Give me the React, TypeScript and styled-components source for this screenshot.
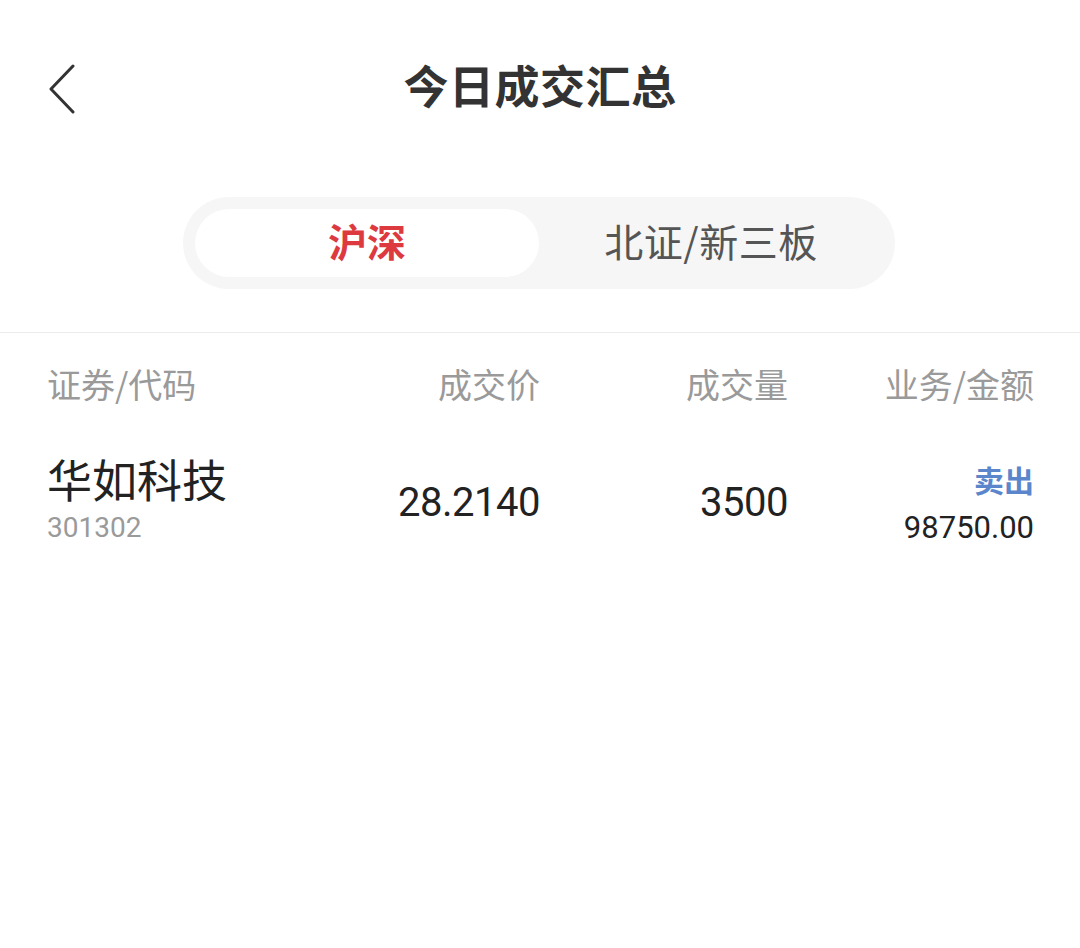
import styled, { createGlobalStyle } from "styled-components";
import { useState } from "react";

const GlobalStyle = createGlobalStyle`
  html, body {
    margin: 0;
    padding: 0;
    background: #ffffff;
  }
  body {
    font-family: Roboto, "Noto Sans CJK SC", sans-serif;
    -webkit-font-smoothing: antialiased;
  }
`;

const tabs = ["沪深", "北证/新三板"];

const rows = [
  {
    name: "华如科技",
    code: "301302",
    price: "28.2140",
    volume: "3500",
    side: "卖出",
    amount: "98750.00",
  },
];

const App = () => {
  const [active, setActive] = useState(0);

  return (
    <Page>
      <GlobalStyle />
      <Header>
        <BackButton type="button" aria-label="返回">
          <svg width="28" height="50" viewBox="0 0 28 50">
            <polyline
              points="25,2 3,25 25,48"
              fill="none"
              stroke="#333333"
              strokeWidth="3"
              strokeLinecap="round"
              strokeLinejoin="round"
            />
          </svg>
        </BackButton>
        <Title>今日成交汇总</Title>
        <span />
      </Header>

      <TabSection>
        <TabBar>
          {tabs.map((t, i) => (
            <Tab key={t} $active={active === i} onClick={() => setActive(i)}>
              {t}
            </Tab>
          ))}
        </TabBar>
      </TabSection>

      <Table>
        <HeadRow>
          <HeadCell>证券/代码</HeadCell>
          <HeadCell $right>成交价</HeadCell>
          <HeadCell $right>成交量</HeadCell>
          <HeadCell $right>业务/金额</HeadCell>
        </HeadRow>
        {rows.map((r) => (
          <DataRow key={r.code}>
            <Stack>
              <StockName>{r.name}</StockName>
              <SubText>{r.code}</SubText>
            </Stack>
            <Number>{r.price}</Number>
            <Number>{r.volume}</Number>
            <Stack $right>
              <Side>{r.side}</Side>
              <Amount>{r.amount}</Amount>
            </Stack>
          </DataRow>
        ))}
      </Table>
    </Page>
  );
};

export default App;

const Page = styled.div`
  width: 1080px;
  min-height: 948px;
  background: #ffffff;
`;

const Header = styled.header`
  height: 176px;
  display: grid;
  grid-template-columns: 1fr auto 1fr;
  align-items: center;
`;

const BackButton = styled.button`
  justify-self: start;
  margin-left: 48px;
  margin-top: 1px;
  padding: 0;
  border: none;
  background: none;
  display: flex;
  cursor: pointer;
`;

const Title = styled.h1`
  margin: 0 0 7px;
  font-family: "Noto Sans CJK SC", sans-serif;
  font-size: 45px;
  font-weight: 700;
  color: #333333;
  letter-spacing: 0.5px;
`;

const TabSection = styled.div`
  padding: 21px 0 43px;
  border-bottom: 1px solid #ebebeb;
  display: flex;
  justify-content: center;
`;

const TabBar = styled.div`
  width: 712px;
  box-sizing: border-box;
  margin-left: -2px;
  padding: 12px;
  border-radius: 46px;
  background: #f6f6f6;
  display: grid;
  grid-template-columns: 1fr 1fr;
`;

const Tab = styled.div<{ $active?: boolean }>`
  height: 68px;
  box-sizing: border-box;
  padding-bottom: 6px;
  border-radius: 34px;
  display: flex;
  align-items: center;
  justify-content: center;
  font-family: "Noto Sans CJK SC", sans-serif;
  font-size: 39px;
  font-weight: ${(p) => (p.$active ? 700 : 400)};
  color: ${(p) => (p.$active ? "#dc3a3f" : "#555555")};
  background: ${(p) => (p.$active ? "#ffffff" : "transparent")};
  letter-spacing: ${(p) => (p.$active ? "0" : "0.5px")};
  cursor: pointer;
`;

const Table = styled.div`
  padding: 0 46px 0 47px;
`;

const rowGrid = `
  display: grid;
  grid-template-columns: 1fr 240px 248px 246px;
`;

const HeadRow = styled.div`
  ${rowGrid}
  height: 100px;
  align-items: center;
`;

const HeadCell = styled.div<{ $right?: boolean }>`
  font-family: "Noto Sans CJK SC", sans-serif;
  font-size: 34px;
  color: #9a9a9a;
  text-align: ${(p) => (p.$right ? "right" : "left")};
`;

const DataRow = styled.div`
  ${rowGrid}
  padding: 20px 0;
  align-items: center;
`;

const Stack = styled.div<{ $right?: boolean }>`
  display: flex;
  flex-direction: column;
  align-items: ${(p) => (p.$right ? "flex-end" : "flex-start")};
`;

const StockName = styled.div`
  font-family: "Noto Sans CJK SC", sans-serif;
  font-size: 45px;
  line-height: 52px;
  color: #222222;
`;

const SubText = styled.div`
  font-family: Roboto, sans-serif;
  font-size: 28px;
  line-height: 46px;
  color: #9a9a9a;
`;

const Number = styled.div`
  font-family: Roboto, sans-serif;
  font-size: 40px;
  color: #222222;
  text-align: right;
  letter-spacing: -0.5px;
`;

const Side = styled.div`
  font-family: "Noto Sans CJK SC", sans-serif;
  font-size: 30px;
  font-weight: 700;
  line-height: 52px;
  color: #5b86cc;
`;

const Amount = styled.div`
  font-family: Roboto, sans-serif;
  font-size: 31px;
  line-height: 46px;
  color: #222222;
`;
